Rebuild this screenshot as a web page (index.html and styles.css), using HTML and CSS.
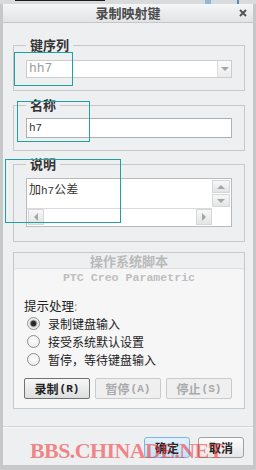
FILE: index.html
```html
<!DOCTYPE html>
<html lang="zh-CN">
<head>
    <meta charset="UTF-8">
    <title>录制映射键</title>
    <link rel="stylesheet" href="styles.css">
</head>
<body>
    <div class="topstrip"></div>
    <div class="window">
        <div class="titlebar">
            <span></span>
            <span class="title">录制映射键</span>
            <span class="close">
                <svg width="8" height="8" viewBox="0 0 8 8"><path d="M1 1L7 7M7 1L1 7" stroke="#555" stroke-width="2"/></svg>
            </span>
        </div>

        <fieldset class="group g1">
            <legend>键序列</legend>
            <div class="combo">
                <span class="combo-text">hh7</span>
                <span class="combo-btn"><span class="arrow-down"></span></span>
            </div>
        </fieldset>

        <fieldset class="group g2">
            <legend>名称</legend>
            <div class="input">h7</div>
        </fieldset>

        <fieldset class="group g3">
            <legend>说明</legend>
            <div class="textarea">
                <div class="ta-text">加<span class="mono">h7</span>公差</div>
                <div class="vscroll">
                    <span class="sbtn"><span class="arrow-up"></span></span>
                    <span class="sbtn"><span class="arrow-down"></span></span>
                </div>
                <div class="hscroll">
                    <span class="sbtn hbtn"><span class="arrow-left"></span></span>
                    <span class="track"></span>
                    <span class="sbtn hbtn"><span class="arrow-right"></span></span>
                </div>
                <div class="corner"></div>
            </div>
        </fieldset>

        <div class="script-box">
            <div class="script-head">操作系统脚本</div>
            <div class="script-panel">
                <div class="ptc">PTC Creo Parametric</div>
                <div class="prompt">提示处理<span class="colon">:</span></div>
                <div class="radio-row"><span class="radio checked"></span>录制键盘输入</div>
                <div class="radio-row"><span class="radio"></span>接受系统默认设置</div>
                <div class="radio-row"><span class="radio"></span>暂停，等待键盘输入</div>
                <div class="btn-row">
                    <span class="btn">录制<span class="key">(R)</span></span>
                    <span class="btn disabled">暂停<span class="key">(A)</span></span>
                    <span class="btn disabled">停止<span class="key">(S)</span></span>
                </div>
            </div>
        </div>

        <div class="separator"></div>

        <div class="footer">
            <span class="fbtn default">确定</span>
            <span class="fbtn">取消</span>
            <span class="watermark">BBS.CHINADE.NET</span>
        </div>

        <!-- annotation frames drawn over the dialog -->
        <div class="mark mark1"></div>
        <div class="mark mark2"></div>
        <div class="mark mark3"></div>
    </div>
    <div class="bottomstrip"></div>
</body>
</html>
```

FILE: styles.css
```css
body {
    margin: 0;
    width: 256px;
    height: 470px;
    overflow: hidden;
    background: #c6c8ca;
    font-family: "Noto Sans CJK SC", sans-serif;
    font-size: 12px;
    color: #222;
}

.topstrip {
    height: 4px;
    background:
        linear-gradient(to right, transparent 15px, #1c1c1c 15px, #1c1c1c 105px, transparent 105px) top / 100% 1px no-repeat,
        linear-gradient(to right, #d9dadb 205px, #8fb8d8 205px, #8fb8d8 211px, #d9dadb 211px, #d9dadb 237px, #4f8fc0 237px, #4f8fc0 239px, #d9dadb 239px);
}

.window {
    position: relative;
    margin: 0 3px;
    height: 461px;
    background: #eeeff1;
    display: flex;
    flex-direction: column;
}

.titlebar {
    height: 18px;
    border-bottom: 1px solid #c4c6c8;
    background: linear-gradient(#f5f6f7, #e2e3e5);
    display: grid;
    grid-template-columns: 1fr auto 1fr;
    align-items: center;
}
.title {
    font-size: 13px;
    font-weight: bold;
    color: #4a4a4a;
    line-height: 18px;
}
.close {
    justify-self: end;
    margin-right: 6px;
    display: flex;
}

/* group boxes */
.group {
    margin: 0 8px 0 10px;
    border: 1px solid #c5c7c9;
    padding: 7px 12px 12px;
    min-width: 0;
}
.group legend {
    padding: 0 4px;
    font-size: 13px;
    font-weight: bold;
    line-height: 16px;
    color: #333;
}
.g1 { margin-top: 14px; }
.g2 { margin-top: 6px; padding-top: 5px; }
.g3 { margin-top: 5px; padding-top: 6px; padding-bottom: 14px; }

.combo {
    box-sizing: border-box;
    height: 18px;
    display: flex;
    border: 1px solid #cbcccd;
    background: #fff;
}
.combo-text {
    flex: 1;
    padding-left: 2px;
    font-family: "Liberation Mono", monospace;
    font-size: 13px;
    line-height: 16px;
    color: #9c9c9c;
}
.combo-btn {
    width: 13px;
    border-left: 1px solid #dcdddf;
    background: linear-gradient(#fafafa, #ececec);
    display: flex;
    align-items: center;
    justify-content: center;
}

.input {
    box-sizing: border-box;
    height: 20px;
    border: 1px solid #aeb0b2;
    background: #fff;
    padding-left: 2px;
    font-family: "Liberation Mono", monospace;
    font-size: 11px;
    line-height: 18px;
    color: #333;
}

.textarea {
    box-sizing: border-box;
    height: 49px;
    border: 1px solid #b8babc;
    background: #fff;
    padding: 0 1px 1px 0;
    display: grid;
    grid-template-columns: 1fr 18px;
    grid-template-rows: 29px 17px;
}
.ta-text {
    padding-left: 2px;
    font-size: 12px;
    line-height: 20px;
    color: #333;
}
.mono {
    font-family: "Liberation Mono", monospace;
    font-size: 11px;
}
.vscroll {
    display: flex;
    flex-direction: column;
    gap: 1px;
    padding-top: 1px;
}
.vscroll .sbtn {
    height: 13px;
}
.hscroll {
    display: flex;
    border-top: 1px solid #dadbdc;
    padding-left: 1px;
}
.hscroll .track {
    flex: 1;
    background: #fff;
}
.hbtn {
    width: 16px;
}
.sbtn {
    box-sizing: border-box;
    border: 1px solid #d6d7d8;
    background: linear-gradient(#f7f7f7, #e3e4e5);
    display: flex;
    align-items: center;
    justify-content: center;
}
.corner {
    background: #fff;
}

.arrow-up, .arrow-down, .arrow-left, .arrow-right {
    width: 0;
    height: 0;
    border: 4px solid transparent;
}
.arrow-up { border-bottom-color: #a4a5a6; border-top-width: 0; }
.arrow-down { border-top-color: #a4a5a6; border-bottom-width: 0; }
.arrow-left { border-right-color: #a4a5a6; border-left-width: 0; }
.arrow-right { border-left-color: #a4a5a6; border-right-width: 0; }

/* operating system script box */
.script-box {
    margin: 10px 8px 0 10px;
    border: 1px solid #c5c7c9;
}
.script-head {
    height: 15px;
    line-height: 15px;
    text-align: center;
    font-size: 13px;
    font-weight: bold;
    color: #b9babb;
}
.script-panel {
    border-top: 1px solid #dcdedf;
    border-radius: 3px 3px 0 0;
    background: #f6f6f7;
    padding: 2px 10px 9px;
}
.ptc {
    text-align: center;
    font-family: "Liberation Mono", monospace;
    font-weight: bold;
    font-size: 11.6px;
    line-height: 14px;
    color: #bdbebf;
}
.prompt {
    margin-top: 12px;
    line-height: 17px;
    font-size: 12.5px;
}
.colon {
    color: #b89a70;
}
.radio-row {
    height: 18px;
    display: flex;
    align-items: center;
    gap: 8px;
    padding-left: 3px;
    font-size: 12px;
}
.radio {
    box-sizing: border-box;
    width: 13px;
    height: 13px;
    border: 1px solid #8f9091;
    border-radius: 50%;
    background: radial-gradient(circle at 50% 40%, #fff, #e4e5e6);
}
.radio.checked {
    background: radial-gradient(circle, #222 0, #333 2.4px, #9a9b9c 3.2px, #e9eaeb 4.2px, #f4f4f4 6px);
}
.btn-row {
    margin-top: 10px;
    display: grid;
    grid-template-columns: repeat(3, 66px);
    gap: 5px;
}
.btn {
    box-sizing: border-box;
    height: 21px;
    border: 1px solid #707172;
    border-radius: 2px;
    background: linear-gradient(#f8f8f8, #dcdddd);
    display: flex;
    align-items: center;
    justify-content: center;
    font-weight: bold;
    font-size: 12px;
    color: #222;
}
.btn.disabled {
    border-color: #c9cacb;
    background: #efeff0;
    color: #a9aaab;
}
.key {
    font-family: "Liberation Mono", monospace;
    font-size: 11px;
    margin-left: 1px;
}

.separator {
    margin-top: 17px;
    border-top: 1px solid #d0d1d3;
    border-bottom: 1px solid #f9f9fa;
}

.footer {
    position: relative;
    margin-top: 9px;
    padding-right: 9px;
    display: flex;
    justify-content: flex-end;
    gap: 8px;
}
.fbtn {
    box-sizing: border-box;
    width: 46px;
    height: 21px;
    border: 1px solid #a0a1a2;
    border-radius: 3px;
    background: linear-gradient(#fcfcfc, #e6e6e7);
    display: flex;
    align-items: center;
    justify-content: center;
    font-weight: bold;
    font-size: 12px;
    color: #222;
}
.fbtn.default {
    border-color: #7fb5e3;
    background: linear-gradient(#e4f2fc, #c1e0f8);
}
.watermark {
    position: absolute;
    left: 27px;
    top: 3px;
    font-family: "Liberation Serif", serif;
    font-weight: bold;
    font-size: 22px;
    line-height: 22px;
    letter-spacing: -0.6px;
    color: rgba(240, 40, 40, 0.55);
    pointer-events: none;
}

.mark {
    position: absolute;
    border: 1px solid #20a0a0;
}
.mark1 { left: 11px; top: 48px; width: 57px; height: 32px; }
.mark2 { left: 14px; top: 97px; width: 71px; height: 39px; }
.mark3 { left: 2px; top: 155px; width: 114px; height: 62px; }

.bottomstrip {
    height: 5px;
}
```
